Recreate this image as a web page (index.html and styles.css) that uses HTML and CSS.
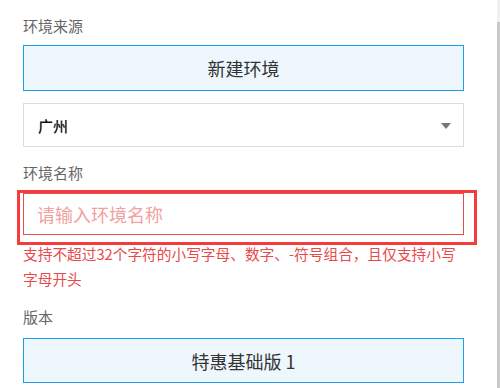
FILE: index.html
```html
<!DOCTYPE html>
<html lang="zh-CN">
<head>
    <meta charset="UTF-8">
    <meta name="viewport" content="width=device-width, initial-scale=1.0">
    <title>新建环境</title>
    <link rel="stylesheet" href="styles.css">
</head>
<body>
    <div class="form">
        <!-- 环境来源 -->
        <div class="label first">环境来源</div>
        <div class="choice">新建环境</div>

        <div class="select">
            <span>广州</span>
            <span class="arrow"></span>
        </div>

        <!-- 环境名称 -->
        <div class="label name-label">环境名称</div>
        <div class="input-wrap">
            <input type="text" class="name-input" placeholder="请输入环境名称">
            <div class="highlight"></div>
        </div>
        <p class="error">支持不超过32个字符的小写字母、数字、-符号组合，且仅支持小写字母开头</p>

        <!-- 版本 -->
        <div class="label version-label">版本</div>
        <div class="choice version">特惠基础版 1</div>
    </div>

    <div class="scrollbar"><div class="thumb"></div></div>
</body>
</html>
```

FILE: styles.css
```css
body {
    margin: 0;
    font-family: "Noto Sans CJK SC", "Noto Sans", sans-serif;
    background: #fff;
    overflow: hidden;
}

.form {
    display: flex;
    flex-direction: column;
    width: 441px;
    padding: 16px 0 0 23px;
}

/* 标签 */
.label {
    font-size: 15px;
    line-height: 20px;
    color: #666;
}

.label.first {
    margin-bottom: 9px;
}

.name-label {
    margin-top: 16px;
    margin-bottom: 10px;
}

.version-label {
    margin-top: 16px;
    margin-bottom: 11px;
}

/* 选中的选项 */
.choice {
    height: 46px;
    box-sizing: border-box;
    border: 1px solid #18a1ea;
    background: #eff7fe;
    color: #333;
    font-size: 18px;
    display: flex;
    align-items: center;
    justify-content: center;
}

.choice.version {
    height: 45px;
}

/* 地域下拉框 */
.select {
    margin-top: 12px;
    height: 44px;
    box-sizing: border-box;
    border: 1px solid #ddd;
    display: flex;
    align-items: center;
    justify-content: space-between;
    padding: 0 12px 0 14px;
    font-size: 15px;
    font-weight: 500;
    color: #111;
}

.arrow {
    width: 0;
    height: 0;
    border-left: 5px solid transparent;
    border-right: 5px solid transparent;
    border-top: 6px solid #777;
    margin-top: 2px;
}

/* 环境名称输入框 */
.input-wrap {
    position: relative;
    height: 42px;
}

.name-input {
    width: 100%;
    height: 42px;
    box-sizing: border-box;
    border: 1px solid #e64e4e;
    padding: 0 13px;
    font-family: inherit;
    font-size: 18px;
    color: #333;
    outline: none;
}

.name-input::placeholder {
    color: #f2a0a0;
}

/* 标注用红框 */
.highlight {
    position: absolute;
    left: -6px;
    top: -3px;
    width: 460px;
    height: 55px;
    box-sizing: border-box;
    border: 3px solid #f53b3b;
    pointer-events: none;
}

.error {
    margin: 6px 0 0;
    font-size: 14.7px;
    line-height: 25px;
    color: #e84a4a;
}

/* 滚动条 */
.scrollbar {
    position: fixed;
    top: 0;
    right: 0;
    width: 3px;
    height: 100%;
    background: #f0f0f0;
}

.thumb {
    margin-top: 22px;
    height: 366px;
    background: #c9c9c9;
}
```
